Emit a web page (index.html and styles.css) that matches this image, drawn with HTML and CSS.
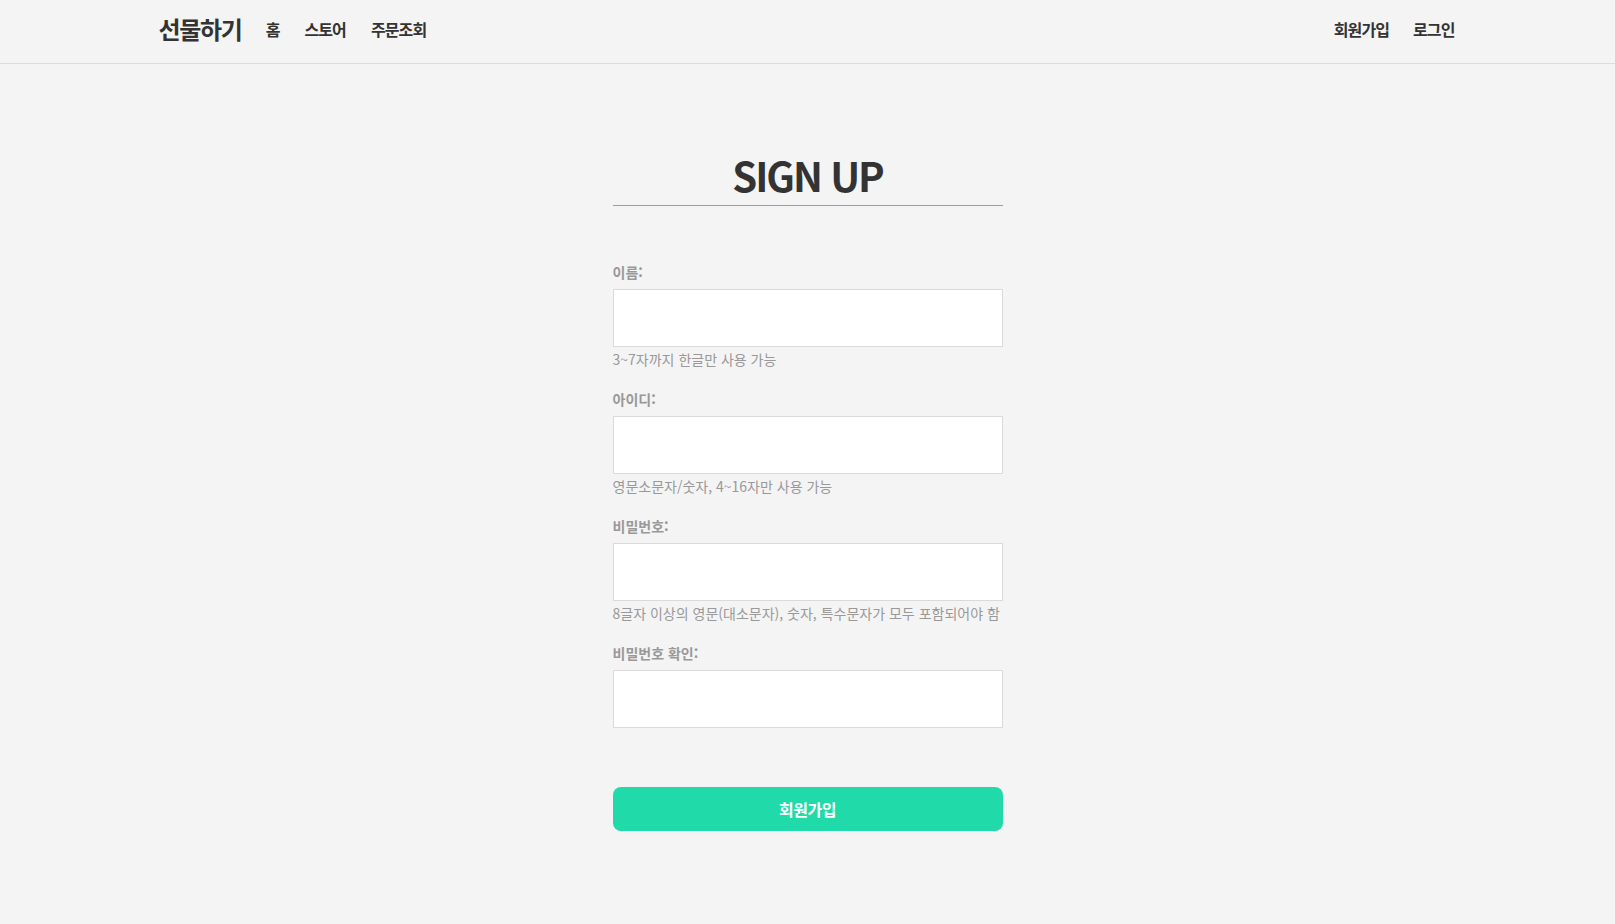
FILE: index.html
```html
<!DOCTYPE html>
<html lang="ko">
<head>
<meta charset="utf-8">
<title>회원가입</title>
<link rel="stylesheet" href="styles.css">
</head>
<body>
<header class="header">
  <div class="header-inner">
    <nav class="nav-left">
      <a class="logo" href="#">선물하기</a>
      <a class="nav-link" href="#">홈</a>
      <a class="nav-link" href="#">스토어</a>
      <a class="nav-link" href="#">주문조회</a>
    </nav>
    <nav class="nav-right">
      <a class="nav-link" href="#">회원가입</a>
      <a class="nav-link" href="#">로그인</a>
    </nav>
  </div>
</header>
<main class="main">
  <form class="signup">
    <h2 class="title">SIGN UP</h2>
    <div class="fields">
      <div class="field">
        <label class="label">이름:</label>
        <input class="input" type="text">
        <p class="help">3~7자까지 한글만 사용 가능</p>
      </div>
      <div class="field">
        <label class="label">아이디:</label>
        <input class="input" type="text">
        <p class="help">영문소문자/숫자, 4~16자만 사용 가능</p>
      </div>
      <div class="field">
        <label class="label">비밀번호:</label>
        <input class="input" type="password">
        <p class="help">8글자 이상의 영문(대소문자), 숫자, 특수문자가 모두 포함되어야 함</p>
      </div>
      <div class="field">
        <label class="label">비밀번호 확인:</label>
        <input class="input" type="password">
      </div>
    </div>
    <button class="submit" type="button">회원가입</button>
  </form>
</main>
</body>
</html>
```
FILE: styles.css
```css
* { box-sizing: border-box; }
html, body { margin: 0; padding: 0; }
body {
  background: #f4f4f4;
  font-family: "Noto Sans CJK KR", "Noto Sans", sans-serif;
  color: #333;
}
a { text-decoration: none; color: inherit; }

.header {
  height: 64px;
  border-bottom: 1px solid #dcdcdc;
}
.header-inner {
  width: 1298px;
  margin: 0 auto;
  height: 63px;
  padding: 0 2px 6px 0;
  display: flex;
  align-items: center;
  justify-content: space-between;
}
.nav-left, .nav-right {
  display: flex;
  align-items: center;
}
.logo {
  font-size: 24px;
  font-weight: 700;
  letter-spacing: -1.3px;
  color: #333;
  margin-right: 24px;
}
.nav-link {
  font-size: 16px;
  font-weight: 700;
  letter-spacing: -0.9px;
  color: #333;
}
.nav-left .nav-link { margin-right: 25px; }
.nav-left .nav-link:last-child { margin-right: 0; }
.nav-right .nav-link { margin-left: 24px; }

.main {
  display: flex;
  justify-content: center;
  padding-top: 87px;
}
.signup {
  width: 390px;
  display: flex;
  flex-direction: column;
}
.title {
  margin: 0;
  text-align: center;
  font-size: 40px;
  font-weight: 700;
  line-height: 48px;
  letter-spacing: -2px;
  padding-bottom: 6px;
  border-bottom: 1px solid #20dba9;
  color: #333;
}
.fields {
  margin-top: 56px;
  display: flex;
  flex-direction: column;
  gap: 20px;
}
.field {
  display: flex;
  flex-direction: column;
}
.label {
  font-size: 14px;
  line-height: 20px;
  font-weight: 700;
  color: #999;
  letter-spacing: 0;
  margin-bottom: 7px;
}
.input {
  height: 58px;
  border: 1px solid #dadada;
  background: #fff;
  margin: 0;
  padding: 0 12px;
  font-size: 15px;
  outline: none;
}
.help {
  margin: 2px 0 0;
  font-size: 14px;
  line-height: 20px;
  color: #999;
  letter-spacing: 0;
  white-space: nowrap;
}
.submit {
  margin-top: 59px;
  height: 44px;
  border: none;
  border-radius: 8px;
  background: #20dba9;
  color: #fff;
  font-family: "Noto Sans CJK KR", "Noto Sans", sans-serif;
  font-size: 16px;
  font-weight: 700;
  letter-spacing: -0.5px;
  cursor: pointer;
}
```
